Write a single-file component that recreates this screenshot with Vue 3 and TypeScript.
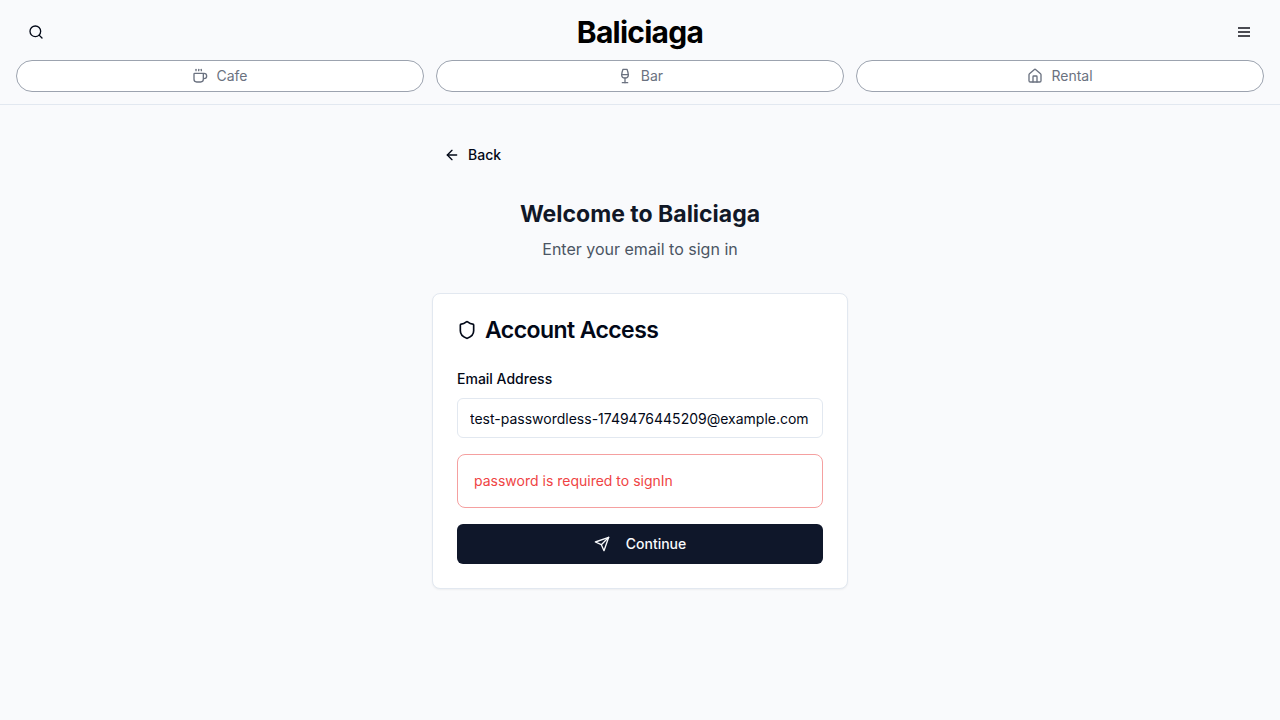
<script setup lang="ts">
import { ref } from 'vue'

const email = ref('test-passwordless-1749476445209@example.com')
const error = ref('password is required to signIn')

interface Category {
  label: string
  paths: string[]
}

const categories: Category[] = [
  {
    label: 'Cafe',
    paths: [
      'M10 2v2',
      'M14 2v2',
      'M16 8a1 1 0 0 1 1 1v8a4 4 0 0 1-4 4H7a4 4 0 0 1-4-4V9a1 1 0 0 1 1-1h14a4 4 0 1 1 0 8h-1',
      'M6 2v2',
    ],
  },
  {
    label: 'Bar',
    paths: ['M8 22h8', 'M7 10h10', 'M12 15v7', 'M12 15a5 5 0 0 0 5-5c0-2-.5-4-2-8H9c-1.500 4-2 6-2 8a5 5 0 0 0 5 5Z'],
  },
  {
    label: 'Rental',
    paths: [
      'M15 21v-8a1 1 0 0 0-1-1h-4a1 1 0 0 0-1 1v8',
      'M3 10a2 2 0 0 1 .709-1.528l7-5.999a2 2 0 0 1 2.582 0l7 5.999A2 2 0 0 1 21 10v9a2 2 0 0 1-2 2H5a2 2 0 0 1-2-2z',
    ],
  },
]
</script>

<template>
  <div class="page">
    <header class="header">
      <div class="topbar">
        <button class="icon-button" type="button" aria-label="Search">
          <svg class="icon" viewBox="0 0 24 24"><circle cx="11" cy="11" r="8" /><path d="m21 21-4.300-4.300" /></svg>
        </button>
        <a class="brand" href="#">Baliciaga</a>
        <button class="icon-button" type="button" aria-label="Menu">
          <svg class="icon menu" viewBox="0 0 16 16"><path d="M2 4h12M2 8h12M2 12h12" /></svg>
        </button>
      </div>
      <nav class="categories">
        <button v-for="c in categories" :key="c.label" class="category" type="button">
          <svg class="icon" viewBox="0 0 24 24"><path v-for="p in c.paths" :key="p" :d="p" /></svg>
          <span>{{ c.label }}</span>
        </button>
      </nav>
    </header>

    <main class="main">
      <button class="back" type="button">
        <svg class="icon" viewBox="0 0 24 24"><path d="m12 19-7-7 7-7" /><path d="M19 12H5" /></svg>
        <span>Back</span>
      </button>
      <div class="intro">
        <h1>Welcome to Baliciaga</h1>
        <p>Enter your email to sign in</p>
      </div>
      <section class="card">
        <h2>
          <svg class="icon shield" viewBox="0 0 24 24">
            <path d="M20 13c0 5-3.500 7.500-7.660 8.950a1 1 0 0 1-.67-.01C7.500 20.500 4 18 4 13V6a1 1 0 0 1 1-1c2 0 4.500-1.200 6.240-2.720a1.170 1.170 0 0 1 1.520 0C14.510 3.810 17 5 19 5a1 1 0 0 1 1 1z" />
          </svg>
          <span>Account Access</span>
        </h2>
        <form class="form" @submit.prevent>
          <div class="field">
            <label for="email">Email Address</label>
            <input id="email" v-model="email" type="email" />
          </div>
          <div class="alert" role="alert">{{ error }}</div>
          <button class="submit" type="submit">
            <svg class="icon" viewBox="0 0 24 24"><path d="m22 2-7 20-4-9-9-4Z" /><path d="M22 2 11 13" /></svg>
            <span>Continue</span>
          </button>
        </form>
      </section>
    </main>
  </div>
</template>

<style>
body {
  margin: 0;
  background: #f9fafc;
}
</style>

<style scoped>
.page {
  min-height: 100vh;
  background: #f9fafc;
  color: #020817;
  font-family: Inter, 'Liberation Sans', sans-serif;
  font-size: 14px;
  line-height: 20px;
}
.page *,
.page {
  box-sizing: border-box;
}
button,
input {
  font: inherit;
  color: inherit;
}
button {
  display: flex;
  align-items: center;
  justify-content: center;
  padding: 0;
  border: 0;
  background: none;
  cursor: pointer;
}
.icon {
  width: 16px;
  height: 16px;
  flex: none;
  fill: none;
  stroke: currentColor;
  stroke-width: 2;
  stroke-linecap: round;
  stroke-linejoin: round;
}
.menu {
  color: #4b4b52;
  stroke-linecap: butt;
}
.header {
  padding: 12px 16px;
  border-bottom: 1px solid #e2e8f0;
}
.topbar {
  display: flex;
  align-items: center;
  justify-content: space-between;
  height: 40px;
  margin-bottom: 8px;
}
.icon-button {
  width: 40px;
  height: 40px;
}
.brand {
  color: #000;
  font-size: 30px;
  line-height: 36px;
  font-weight: 700;
  letter-spacing: -0.025em;
  text-decoration: none;
}
.categories {
  display: grid;
  grid-template-columns: repeat(3, 1fr);
  gap: 12px;
}
.category {
  height: 32px;
  gap: 8px;
  border: 1px solid #9ca3af;
  border-radius: 16px;
  background: #fff;
  color: #6b7280;
}
.main {
  max-width: 448px;
  margin: 0 auto;
  padding: 32px 16px;
}
.back {
  height: 36px;
  gap: 8px;
  padding: 0 12px;
  font-weight: 500;
}
.intro {
  margin: 24px 0 32px;
  text-align: center;
}
h1,
h2,
p {
  margin: 0;
}
h1 {
  margin-bottom: 6px;
  color: #111827;
  font-size: 23px;
  line-height: 34px;
  font-weight: 700;
}
p {
  color: #4b5563;
  font-size: 16px;
  line-height: 24px;
}
.card {
  padding: 24px;
  border: 1px solid #e2e8f0;
  border-radius: 8px;
  background: #fff;
  box-shadow: 0 1px 2px rgb(0 0 0 / 5%);
}
h2 {
  display: flex;
  align-items: center;
  gap: 8px;
  margin-bottom: 26px;
  font-size: 23px;
  line-height: 24px;
  font-weight: 600;
  letter-spacing: -0.025em;
}
.shield {
  width: 20px;
  height: 20px;
}
.form {
  display: grid;
  gap: 16px;
}
.field {
  display: grid;
  gap: 8px;
}
label {
  line-height: 22px;
  font-weight: 500;
}
input {
  width: 100%;
  height: 40px;
  padding: 8px 12px;
  border: 1px solid #e2e8f0;
  border-radius: 6px;
  background: #fff;
}
.alert {
  padding: 16px;
  border: 1px solid #f5a0a0;
  border-radius: 8px;
  color: #ef4444;
}
.submit {
  height: 40px;
  gap: 16px;
  border-radius: 6px;
  background: #0f172a;
  color: #f8fafc;
  font-weight: 500;
}
</style>
